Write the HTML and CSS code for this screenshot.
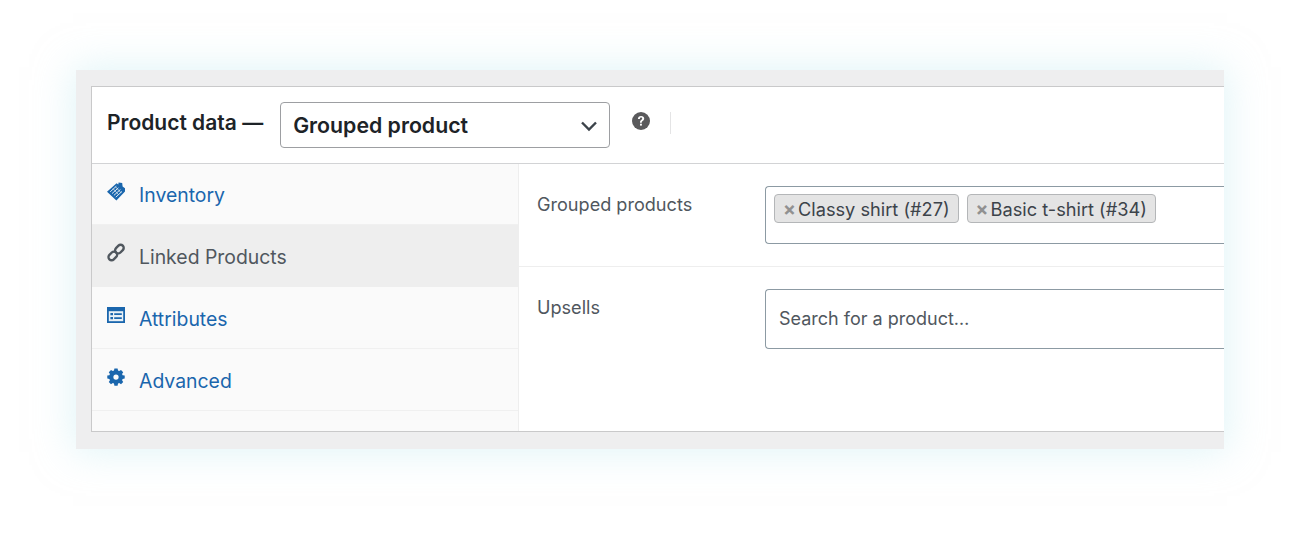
FILE: index.html
```html
<!DOCTYPE html>
<html lang="en">
<head>
<meta charset="utf-8">
<title>Product data</title>
<link rel="stylesheet" href="styles.css">
</head>
<body>
<div class="frame">
  <div class="panel">
    <header class="head">
      <h2 class="title">Product data —</h2>
      <div class="type-select">
        <span>Grouped product</span>
        <svg class="chev" viewBox="0 0 18 12" width="18" height="12"><path d="M2 2.5 9 9.5 16 2.5" fill="none" stroke="#3c434a" stroke-width="2.4"/></svg>
      </div>
      <svg class="help" viewBox="0 0 18 18" width="18" height="18"><circle cx="9" cy="9" r="9" fill="#5a5a5c"/><path d="M5.9 6.9C5.9 5 7.2 3.9 9.1 3.9c1.9 0 3.1 1.1 3.1 2.6 0 1.2-.7 1.8-1.5 2.4-.6.4-.9.7-.9 1.4v.4H8v-.6c0-1.1.5-1.6 1.2-2.1.6-.4 1-.8 1-1.4 0-.6-.5-1-1.1-1-.7 0-1.2.5-1.2 1.3z" fill="#fff"/><rect x="8" y="11.7" width="1.9" height="1.9" fill="#fff"/></svg>
      <span class="sep"></span>
    </header>
    <div class="body">
      <nav class="side">
        <a class="tab">
          <svg class="ico" viewBox="0 0 20 20" width="20" height="20"><path d="M1 10.8 10.6 2.2l1.7 1.2.3-2 3.6.6.4 3.4 2.4 1.8 0 3.4-8.6 9z" fill="#1a66ad"/><path d="M4.2 10.8 10.4 5.2M6 12.6 12.4 6.8M7.9 14.4 14.4 8.5M9.8 16.2 16 10.4" stroke="#dbe8f2" stroke-width="1" fill="none"/><path d="M7 7.6 12.8 14M9.4 5.6 15.2 12" stroke="#dbe8f2" stroke-width=".7" fill="none"/></svg>
          <span>Inventory</span>
        </a>
        <a class="tab active">
          <svg class="ico" viewBox="0 0 20 20" width="20" height="20"><g fill="none" stroke="#50575e" stroke-width="2.4"><rect x="8.6" y="3" width="9.6" height="6.2" rx="3.1" transform="rotate(-45 13.4 6.1)"/><rect x="2" y="9.8" width="9.6" height="6.2" rx="3.1" transform="rotate(-45 6.8 12.9)"/></g></svg>
          <span>Linked Products</span>
        </a>
        <a class="tab">
          <svg class="ico" viewBox="0 0 20 20" width="20" height="20"><path d="M1 2h18v16H1z" fill="#1a66ad"/><path d="M2.8 6.2h14.4v10H2.8z" fill="#e8f0f6"/><path d="M4.4 8h2.6v2.2H4.4zM4.4 12h2.6v2.2H4.4zM8.2 8.3h7.6v1.6H8.2zM8.2 12.3h7.6v1.6H8.2z" fill="#1a66ad"/></svg>
          <span>Attributes</span>
        </a>
        <a class="tab">
          <svg class="ico" viewBox="0 0 20 20" width="20" height="20"><path fill-rule="evenodd" fill="#1a66ad" d="M8.2 1.2h3.6l.5 2.4 1.3.6 2.1-1.3 2.5 2.5-1.3 2.1.6 1.3 2.4.5v3.4l-2.4.5-.6 1.3 1.3 2.1-2.5 2.5-2.1-1.3-1.3.6-.5 2.4H8.2l-.5-2.4-1.3-.6-2.1 1.3-2.5-2.5 1.3-2.1-.6-1.3-2.4-.5V9.3l2.4-.5.6-1.3-1.3-2.1 2.5-2.5 2.1 1.3 1.3-.6zM10 8a3 3 0 1 0 0 6 3 3 0 0 0 0-6z" transform="translate(1.2 .4) scale(.88)"/></svg>
          <span>Advanced</span>
        </a>
      </nav>
      <main class="main">
        <div class="field first">
          <label class="label">Grouped products</label>
          <div class="box tags">
            <span class="chip"><b class="x">×</b>Classy shirt (#27)</span>
            <span class="chip"><b class="x">×</b>Basic t-shirt (#34)</span>
          </div>
        </div>
        <div class="field">
          <label class="label">Upsells</label>
          <div class="box search">Search for a product…</div>
        </div>
      </main>
    </div>
  </div>
</div>
</body>
</html>
```
FILE: styles.css
```css
* { box-sizing: border-box; }
html, body { margin: 0; height: 100%; background: #fff; overflow: hidden; }
body { padding: 70px 76px 0; font-family: Inter, "Noto Sans", sans-serif; color: #3c434a; }
.frame {
  height: 379px;
  padding: 16px 0 17px 15px;
  background: #eeeeef;
  box-shadow: 0 0 36px 3px rgba(195, 235, 242, .5);
}
.panel {
  height: 346px;
  background: #fff;
  border: 1px solid #c9c9ca;
  border-right: 0;
  display: flex;
  flex-direction: column;
}
.head {
  height: 77px;
  flex: none;
  display: flex;
  align-items: flex-start;
  padding-left: 15px;
  border-bottom: 1px solid #d2d3d5;
}
.title {
  margin: 22px 17px 0 0;
  font-size: 21px;
  line-height: 28px;
  font-weight: 600;
  color: #1d2327;
  white-space: nowrap;
}
.type-select {
  margin-top: 15px;
  width: 330px;
  height: 46px;
  flex: none;
  padding: 0 12px;
  display: flex;
  align-items: center;
  justify-content: space-between;
  border: 1px solid #9d9fa2;
  border-radius: 4px;
  font-size: 21.3px;
  font-weight: 600;
  color: #1d2327;
}
.chev { margin-right: -1px; margin-top: 2px; }
.help { margin: 25px 0 0 22px; flex: none; }
.sep { margin: 25px 0 0 20px; width: 1px; height: 22px; background: #e4e4e5; }
.body { flex: 1; display: flex; min-height: 0; }
.side {
  width: 427px;
  flex: none;
  background: #fafafa;
  border-right: 1px solid #eeeeee;
}
.tab {
  height: 62px;
  display: flex;
  align-items: flex-start;
  padding: 20px 0 0 14px;
  gap: 13px;
  font-size: 19.4px;
  line-height: 25px;
  color: #1a66ad;
  border-bottom: 1px solid #f0f0f0;
}
.tab:first-child { height: 61px; padding-top: 19px; }
.tab.active { background: #eeeeee; color: #50575e; border-bottom-color: #eeeeee; }
.ico { flex: none; margin-top: -2px; }
.main { flex: 1; min-width: 0; overflow: hidden; }
.field { display: flex; align-items: flex-start; padding: 22px 0 0 18px; }
.field.first { height: 103px; border-bottom: 1px solid #eeeeee; }
.label {
  width: 228px;
  flex: none;
  font-size: 18.1px;
  line-height: 36px;
  color: #50575e;
}
.box {
  flex: 1;
  border: 1px solid #8c9aa3;
  border-right: 0;
  border-radius: 4px 0 0 4px;
}
.tags { height: 58px; padding: 7px 8px; display: flex; align-items: flex-start; gap: 8px; }
.chip {
  height: 29px;
  padding: 1px 8px 0;
  display: flex;
  align-items: center;
  background: #e4e4e4;
  border: 1px solid #b4b6b8;
  border-radius: 4px;
  font-size: 18.2px;
  color: #3c434a;
}
.x { width: 15px; flex: none; font-size: 19px; font-weight: 700; color: #919191; }
.search { height: 60px; padding: 0 0 2px 13px; display: flex; align-items: center; font-size: 18px; color: #50575e; }
```
